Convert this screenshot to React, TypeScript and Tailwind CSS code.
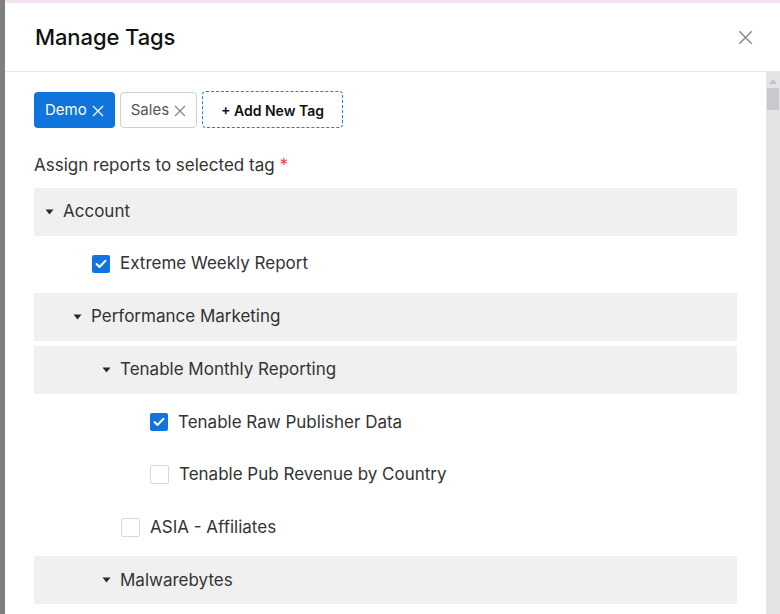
import React from "react";

type Node =
  | { kind: "group"; label: string; depth: number }
  | { kind: "item"; label: string; depth: number; checked: boolean };

const nodes: Node[] = [
  { kind: "group", label: "Account", depth: 0 },
  { kind: "item", label: "Extreme Weekly Report", depth: 1, checked: true },
  { kind: "group", label: "Performance Marketing", depth: 1 },
  { kind: "group", label: "Tenable Monthly Reporting", depth: 2 },
  { kind: "item", label: "Tenable Raw Publisher Data", depth: 3, checked: true },
  { kind: "item", label: "Tenable Pub Revenue by Country", depth: 3, checked: false },
  { kind: "item", label: "ASIA - Affiliates", depth: 2, checked: false },
  { kind: "group", label: "Malwarebytes", depth: 2 },
];

const groupPad = ["pl-[11px]", "pl-[39px]", "pl-[68px]", "pl-[97px]"];
const itemPad = ["pl-[29px]", "pl-[58px]", "pl-[87px]", "pl-[116px]"];

function Caret() {
  return (
    <svg width="9" height="6" viewBox="0 0 9 6" className="shrink-0">
      <path d="M0.5 0.5 L8.5 0.5 L4.5 5.5 Z" fill="#2b2b2b" />
    </svg>
  );
}

function Check({ checked }: { checked: boolean }) {
  if (checked) {
    return (
      <span className="flex h-[18px] w-[18px] shrink-0 items-center justify-center rounded-[2px] bg-[#0f74dc]">
        <svg width="12" height="10" viewBox="0 0 12 10">
          <path d="M1.5 5 L4.5 8 L10.5 1.8" fill="none" stroke="#fff" strokeWidth="2" strokeLinecap="round" strokeLinejoin="round" />
        </svg>
      </span>
    );
  }
  return <span className="h-[19px] w-[19px] shrink-0 rounded-[2px] border border-[#d9d9d9] bg-white" />;
}

function XIcon({ size, color, width }: { size: number; color: string; width: number }) {
  return (
    <svg width={size} height={size} viewBox="0 0 12 12">
      <path d="M1 1 L11 11 M11 1 L1 11" stroke={color} strokeWidth={width} fill="none" />
    </svg>
  );
}

export default function App() {
  return (
    <div
      className="flex h-[614px] w-[780px] overflow-hidden bg-[#7f7f7f]"
      style={{ fontFamily: "Inter, 'Noto Sans', sans-serif" }}
    >
      <div className="ml-[5px] flex flex-1 flex-col">
        <div className="h-[3px] bg-[#f2e4f2]" />
        <div className="flex flex-1 flex-col bg-white">
          <div className="flex h-[69px] items-center justify-between border-b border-[#e8e8e8] pl-[30px] pr-[27px]">
            <h1 className="text-[22px] font-medium tracking-[-0.1px] text-[#111]">Manage Tags</h1>
            <XIcon size={15} color="#8b9098" width={1.3} />
          </div>
          <div className="flex flex-1 min-h-0">
            <div className="flex-1 pl-[29px] pr-[29px] pt-[19px]">
              <div className="flex items-center gap-[5px]">
                <span className="flex h-[36px] items-center gap-[5px] rounded-[4px] bg-[#0f74dc] pl-[11px] pr-[11px] pt-[2px] text-[15px] text-white">
                  Demo
                  <XIcon size={12} color="#fff" width={1.3} />
                </span>
                <span className="flex h-[36px] items-center gap-[5px] rounded-[4px] border border-[#cfcfcf] pl-[10px] pr-[10px] pt-[2px] text-[15px] text-[#555]">
                  Sales
                  <XIcon size={12} color="#888" width={1.3} />
                </span>
                <span className="flex h-[37px] items-center rounded-[4px] border border-dashed border-[#1f7fe0] px-[18px] pt-[1px] text-[14px] font-semibold text-[#111]">
                  + Add New Tag
                </span>
              </div>
              <div className="mt-[25px] text-[17px] text-[#333]">
                Assign reports to selected tag <span className="text-[#ef4444]">*</span>
              </div>
              <div className="mt-[9px] flex flex-col gap-[4.7px]">
                {nodes.map((n, i) =>
                  n.kind === "group" ? (
                    <div
                      key={i}
                      className={`flex h-[48px] items-center gap-[9px] bg-[#f0f0f0] text-[17px] text-[#333] ${groupPad[n.depth]}`}
                    >
                      <Caret />
                      <span>{n.label}</span>
                    </div>
                  ) : (
                    <div
                      key={i}
                      className={`flex h-[48px] items-center gap-[10px] text-[17px] text-[#333] ${itemPad[n.depth]}`}
                    >
                      <Check checked={n.checked} />
                      <span>{n.label}</span>
                    </div>
                  )
                )}
              </div>
            </div>
            <div className="flex w-[14px] flex-col items-center bg-[#e4e4e6]">
              <svg width="8" height="5" viewBox="0 0 8 5" className="mt-[7px]">
                <path d="M0 5 L4 0 L8 5 Z" fill="#c3c4c8" />
              </svg>
              <div className="mt-[4px] h-[22px] w-[12px] bg-[#c8c9cd]" />
            </div>
          </div>
        </div>
      </div>
    </div>
  );
}
